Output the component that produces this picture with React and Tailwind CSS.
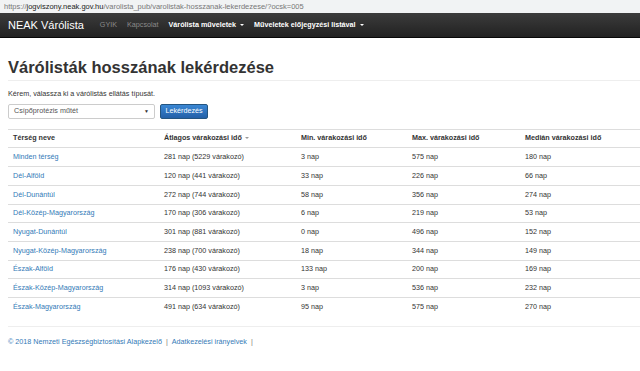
import React from "react";

const rows = [
  ["Minden térség", "281 nap (5229 várakozó)", "3 nap", "575 nap", "180 nap", "h-[18px]"],
  ["Dél-Alföld", "120 nap (441 várakozó)", "33 nap", "226 nap", "66 nap", "h-[19px]"],
  ["Dél-Dunántúl", "272 nap (744 várakozó)", "58 nap", "356 nap", "274 nap", "h-[19px]"],
  ["Dél-Közép-Magyarország", "170 nap (306 várakozó)", "6 nap", "219 nap", "53 nap", "h-[18px]"],
  ["Nyugat-Dunántúl", "301 nap (881 várakozó)", "0 nap", "496 nap", "152 nap", "h-[19px]"],
  ["Nyugat-Közép-Magyarország", "238 nap (700 várakozó)", "18 nap", "344 nap", "149 nap", "h-[19px]"],
  ["Észak-Alföld", "176 nap (430 várakozó)", "133 nap", "200 nap", "169 nap", "h-[18px]"],
  ["Észak-Közép-Magyarország", "314 nap (1093 várakozó)", "3 nap", "536 nap", "232 nap", "h-[19px]"],
  ["Észak-Magyarország", "491 nap (634 várakozó)", "95 nap", "575 nap", "270 nap", "h-[19px]"],
];

const cols = "grid grid-cols-[151px_137px_111px_113px_200px]";

export default function App() {
  return (
    <div className="w-[640px] h-[371px] overflow-hidden bg-white font-['Liberation_Sans',Arial,sans-serif] text-[#333]">
      {/* address bar */}
      <div className="h-[13px] bg-[#f1f3f4] flex items-center px-[4px] text-[7.5px] leading-none whitespace-nowrap">
        <span className="text-[#777]">https://</span>
        <span className="text-[#222]">jogviszony.neak.gov.hu</span>
        <span className="text-[#777]">/varolista_pub/varolistak-hosszanak-lekerdezese/?ocsk=005</span>
      </div>
      {/* navbar */}
      <div className="h-[25px] bg-gradient-to-b from-[#3c3c3c] to-[#222] border-b border-[#080808] flex items-center px-[8px] whitespace-nowrap">
        <span className="text-white text-[11px] mr-[16px]">NEAK Várólista</span>
        <span className="text-[#8a8a8a] text-[7.2px] mr-[10px]">GYIK</span>
        <span className="text-[#8a8a8a] text-[7.2px] mr-[10px]">Kapcsolat</span>
        <span className="text-white text-[7.2px] font-bold mr-[10px] flex items-center">
          Várólista műveletek
          <span className="ml-[4px] inline-block w-0 h-0 border-l-[2px] border-r-[2px] border-t-[2px] border-l-transparent border-r-transparent border-t-white"></span>
        </span>
        <span className="text-white text-[7.2px] font-bold flex items-center">
          Műveletek előjegyzési listával
          <span className="ml-[4px] inline-block w-0 h-0 border-l-[2px] border-r-[2px] border-t-[2px] border-l-transparent border-r-transparent border-t-white"></span>
        </span>
      </div>

      <div className="pl-[8px]">
        <h1 className="mt-[19px] text-[16.5px] leading-[20px] font-bold text-[#333]">Várólisták hosszának lekérdezése</h1>
        <div className="mt-[3px] border-t border-[#eee]"></div>
        <p className="mt-[8px] text-[7.2px] leading-[10px]">Kérem, válassza ki a várólistás ellátás típusát.</p>
        <div className="mt-[5px] flex items-center gap-[5px]">
          <div className="w-[147px] h-[15px] bg-white border border-[#ccc] rounded-[2px] flex items-center justify-between px-[5px] text-[7.2px] text-[#555]">
            <span>Csípőprotézis műtét</span>
            <span className="text-[5px] text-[#333]">▼</span>
          </div>
          <div className="w-[48px] h-[15px] rounded-[2px] border border-[#245580] bg-gradient-to-b from-[#3a87d4] to-[#2360a8] flex items-center justify-center text-[7.2px] text-white">
            Lekérdezés
          </div>
        </div>

        <div className="mt-[10px] border-t border-[#ddd] text-[7.2px]">
          <div className={`${cols} h-[18px] items-center border-b border-[#ddd] font-bold`}>
            <div className="px-[5px]">Térség neve</div>
            <div className="px-[5px] flex items-center">
              Átlagos várakozási idő
              <span className="ml-[3px] inline-block w-0 h-0 border-l-[2px] border-r-[2px] border-t-[2px] border-l-transparent border-r-transparent border-t-[#999]"></span>
            </div>
            <div className="px-[5px]">Min. várakozási idő</div>
            <div className="px-[5px]">Max. várakozási idő</div>
            <div className="px-[5px]">Medián várakozási idő</div>
          </div>
          {rows.map((r, i) => (
            <div key={i} className={`${cols} ${r[5]} items-center ${i > 0 ? "border-t border-[#ddd]" : ""}`}>
              <div className="px-[5px] text-[#337ab7]">{r[0]}</div>
              <div className="px-[5px]">{r[1]}</div>
              <div className="px-[5px]">{r[2]}</div>
              <div className="px-[5px]">{r[3]}</div>
              <div className="px-[5px]">{r[4]}</div>
            </div>
          ))}
        </div>

        <div className="mt-[10px] border-t border-[#eee]"></div>
        <div className="mt-[10px] text-[7.2px] leading-[10px] whitespace-nowrap">
          <span className="text-[#337ab7]">© 2018 Nemzeti Egészségbiztosítási Alapkezelő</span>
          <span className="text-[#777] mx-[4px]">|</span>
          <span className="text-[#337ab7]">Adatkezelési irányelvek</span>
          <span className="text-[#777] mx-[4px]">|</span>
        </div>
      </div>
    </div>
  );
}
